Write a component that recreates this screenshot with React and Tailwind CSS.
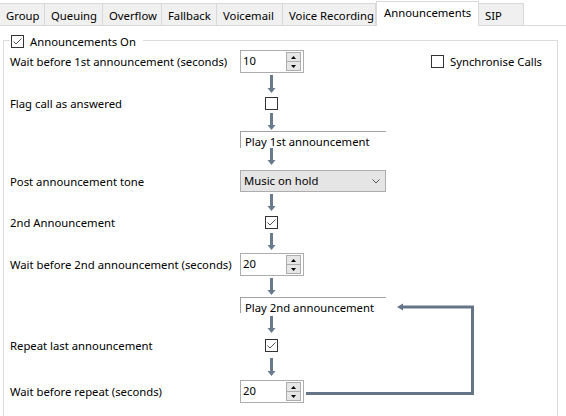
const ARROW = '#687a8c'

const TABS = [
  { name: 'Group', w: 'w-[45px]' },
  { name: 'Queuing', w: 'w-[58px]' },
  { name: 'Overflow', w: 'w-[59px]' },
  { name: 'Fallback', w: 'w-[55px]' },
  { name: 'Voicemail', w: 'w-[66px]' },
  { name: 'Voice Recording', w: 'w-[93px]' },
  { name: 'Announcements', w: 'w-[103px]', active: true },
  { name: 'SIP', w: 'w-[45px]' },
]

function Check({ checked, className = '' }) {
  return (
    <span
      className={`block h-[13px] w-[13px] shrink-0 border border-[#333333] bg-white ${className}`}
    >
      {checked && (
        <svg width="11" height="11" viewBox="0 0 11 11" className="block">
          <path d="M1.5 5.5 L4 8 L9.5 2.5" fill="none" stroke="#555555" strokeWidth="1" />
        </svg>
      )}
    </span>
  )
}

function DownArrow({ height = 17, className = '' }) {
  return (
    <svg width="9" height={height} className={`ml-[27px] block ${className}`}>
      <rect x="3" y="0" width="3" height={height - 4} fill={ARROW} />
      <polygon points={`0.5,${height - 5} 8.5,${height - 5} 4.5,${height}`} fill={ARROW} />
    </svg>
  )
}

function Spinner({ value }) {
  return (
    <div className="flex h-[23px] w-[64px] shrink-0 border border-[#adadad] bg-white">
      <span className="flex-1 pl-[2px] leading-[19px]">{value}</span>
      <div className="my-[1px] mr-[2px] flex w-[15px] flex-col border border-[#adadad] bg-[#e6e6e6]">
        <span className="flex flex-1 items-center justify-center border-b border-[#adadad]">
          <svg width="5" height="3" className="block">
            <polygon points="0,3 5,3 2.5,0" fill="#000" />
          </svg>
        </span>
        <span className="flex flex-1 items-center justify-center">
          <svg width="5" height="3" className="block">
            <polygon points="0,0 5,0 2.5,3" fill="#000" />
          </svg>
        </span>
      </div>
    </div>
  )
}

function StepBox({ children, className = '' }) {
  return (
    <div
      className={`w-[146px] border-l border-t border-[#a0a0a0] pl-[4px] pt-[2px] leading-[15px] ${className}`}
    >
      {children}
    </div>
  )
}

function Row({ label, children, className = '' }) {
  return (
    <div className={`flex items-center ${className}`}>
      <span className="w-[230px] shrink-0 whitespace-nowrap pt-px">{label}</span>
      {children}
    </div>
  )
}

export default function App() {
  return (
    <div className="relative h-[416px] w-[566px] overflow-hidden bg-white font-['Noto_Sans',sans-serif] text-[11.3px] leading-none text-black">
      <div className="flex h-[26px] items-end border-b border-[#d9d9d9]">
        {TABS.map((tab) =>
          tab.active ? (
            <div
              key={tab.name}
              className={`${tab.w} relative -mb-px h-[25px] whitespace-nowrap border-x border-t border-[#d9d9d9] bg-white pl-[7px] pt-[5px]`}
            >
              {tab.name}
            </div>
          ) : (
            <div
              key={tab.name}
              className={`${tab.w} h-[22px] whitespace-nowrap border-r border-t border-[#d9d9d9] bg-[#f0f0f0] pl-[6px] pt-[6px]`}
            >
              {tab.name}
            </div>
          )
        )}
      </div>

      <fieldset className="ml-[3px] mt-[6px] w-[555px] min-w-0 border border-[#dcdcdc] pb-[20px] pl-[6px] pr-[8px]">
        <legend className="flex h-[16px] items-center gap-[6px] pl-[1px] pr-[7px] pt-[3px]">
          <Check checked />
          <span>Announcements On</span>
        </legend>

        <Row label="Wait before 1st announcement (seconds)" className="mt-[2px]">
          <Spinner value="10" />
          <Check className="ml-[127px]" />
          <span className="ml-[6px]">Synchronise Calls</span>
        </Row>
        <DownArrow height={18} className="mt-[2px] ml-[257px]" />

        <Row label="Flag call as answered" className="mt-[4px]">
          <Check className="ml-[25px]" />
        </Row>
        <DownArrow height={17} className="mt-[3px] ml-[257px]" />
        <StepBox className="mt-[1px] ml-[230px] h-[17px]">Play 1st announcement</StepBox>
        <DownArrow height={17} className="ml-[257px]" />

        <Row label="Post announcement tone" className="mt-[5px]">
          <div className="flex h-[22px] w-[146px] items-center justify-between border border-[#adadad] bg-[#e5e5e5] pl-[3px] pr-[5px]">
            <span>Music on hold</span>
            <svg width="8" height="5" className="block">
              <path d="M0.5 0.5 L4 4 L7.5 0.5" fill="none" stroke="#555555" strokeWidth="1" />
            </svg>
          </div>
        </Row>
        <DownArrow height={17} className="mt-[2px] ml-[257px]" />

        <Row label="2nd Announcement" className="mt-[5px]">
          <Check checked className="ml-[25px]" />
        </Row>
        <DownArrow height={17} className="mt-[4px] ml-[257px]" />

        <Row label="Wait before 2nd announcement (seconds)" className="mt-[3px]">
          <Spinner value="20" />
        </Row>
        <DownArrow height={17} className="mt-[2px] ml-[257px]" />
        <StepBox className="mt-[2px] ml-[230px] h-[16px]">Play 2nd announcement</StepBox>
        <DownArrow height={17} className="mt-[3px] ml-[257px]" />

        <Row label="Repeat last announcement" className="mt-[6px]">
          <Check checked className="ml-[25px]" />
        </Row>
        <DownArrow height={18} className="mt-[6px] ml-[257px]" />

        <Row label="Wait before repeat (seconds)" className="mt-[4px]">
          <Spinner value="20" />
        </Row>
      </fieldset>

      <svg
        width="566"
        height="416"
        className="pointer-events-none absolute left-0 top-0"
      >
        <path
          d="M306 393.5 H472.5 V307 H401"
          fill="none"
          stroke="#657587"
          strokeWidth="3"
        />
        <polygon points="397,307 403,303.5 403,310.5" fill="#657587" />
      </svg>
    </div>
  )
}
